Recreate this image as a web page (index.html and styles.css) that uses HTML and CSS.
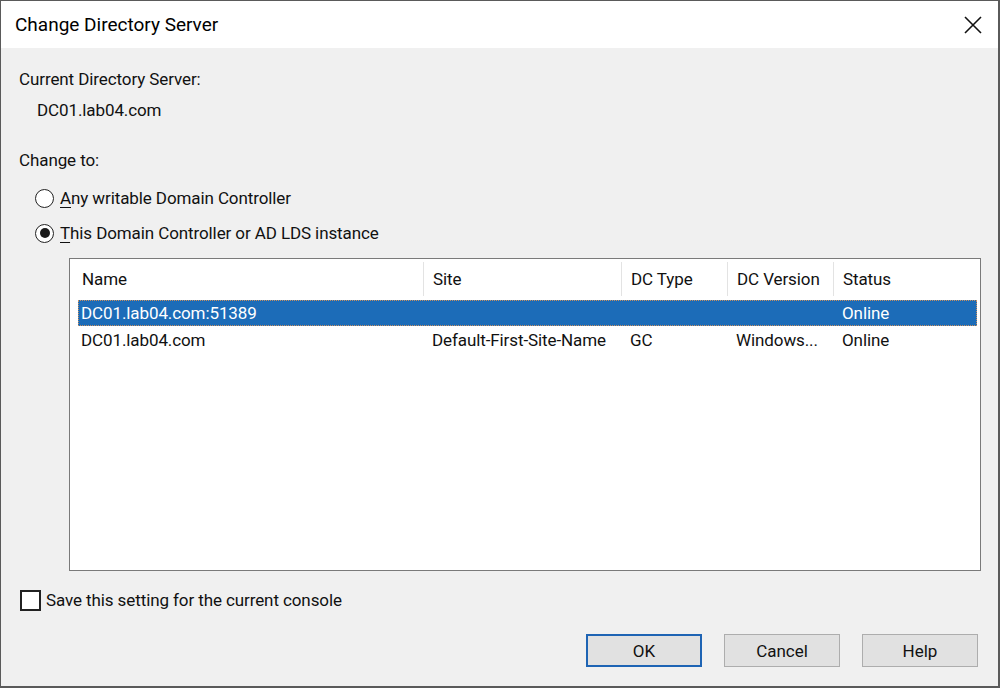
FILE: index.html
```html
<!DOCTYPE html>
<html lang="en">
<head>
    <meta charset="UTF-8">
    <title>Change Directory Server</title>
    <link rel="stylesheet" href="styles.css">
</head>
<body>
    <div class="dialog">
        <div class="titlebar">
            <span class="title">Change Directory Server</span>
            <svg class="close" width="20" height="20" viewBox="0 0 20 20">
                <path d="M2 2 L18 18 M18 2 L2 18" stroke="#111" stroke-width="1.6" fill="none"/>
            </svg>
        </div>
        <div class="content">
            <div class="label first">Current Directory Server:</div>
            <div class="value">DC01.lab04.com</div>
            <div class="label change">Change to:</div>

            <div class="radio-row one">
                <span class="radio"></span>
                <span><u>A</u>ny writable Domain Controller</span>
            </div>
            <div class="radio-row two">
                <span class="radio checked"></span>
                <span><u>T</u>his Domain Controller or AD LDS instance</span>
            </div>

            <div class="list">
                <div class="list-head">
                    <div class="col">Name</div>
                    <div class="col">Site</div>
                    <div class="col">DC Type</div>
                    <div class="col">DC Version</div>
                    <div class="col">Status</div>
                </div>
                <div class="list-row selected">
                    <div class="cell">DC01.lab04.com:51389</div>
                    <div class="cell"></div>
                    <div class="cell"></div>
                    <div class="cell"></div>
                    <div class="cell">Online</div>
                </div>
                <div class="list-row">
                    <div class="cell">DC01.lab04.com</div>
                    <div class="cell">Default-First-Site-Name</div>
                    <div class="cell">GC</div>
                    <div class="cell">Windows...</div>
                    <div class="cell">Online</div>
                </div>
            </div>

            <div class="check-row">
                <span class="checkbox"></span>
                <span>Save this setting for the current console</span>
            </div>

            <div class="buttons">
                <button class="btn default">OK</button>
                <button class="btn">Cancel</button>
                <button class="btn">Help</button>
            </div>
        </div>
    </div>
</body>
</html>
```

FILE: styles.css
```css
body {
    margin: 0;
    font-family: Roboto, "Noto Sans", sans-serif;
    font-size: 17px;
    letter-spacing: -0.1px;
    color: #111;
    background: #f0f0f0;
}

.dialog {
    width: 1000px;
    height: 688px;
    box-sizing: border-box;
    border: 1px solid #5a5a5a;
    border-bottom-width: 2px;
    border-right-width: 2px;
    display: flex;
    flex-direction: column;
}

.titlebar {
    height: 47px;
    background: #fff;
    display: flex;
    align-items: center;
    justify-content: space-between;
    padding: 0 15px 0 14px;
    flex-shrink: 0;
}

.title {
    font-size: 19px;
    letter-spacing: 0;
    color: #000;
}

.close {
    margin-top: 1px;
}

.content {
    flex: 1;
    background: #f0f0f0;
    padding: 0 20px 0 18px;
    display: flex;
    flex-direction: column;
}

.label,
.value,
.radio-row,
.check-row {
    line-height: 22px;
    height: 22px;
}

.label.first {
    margin-top: 20px;
}

.value {
    margin-top: 9px;
    padding-left: 18px;
}

.label.change {
    margin-top: 28px;
}

.radio-row {
    display: flex;
    align-items: center;
    gap: 6px;
    padding-left: 16px;
}

.radio-row.one {
    margin-top: 16px;
}

.radio-row.two {
    margin-top: 13px;
}

.radio {
    width: 17px;
    height: 17px;
    border: 1.5px solid #222;
    border-radius: 50%;
    background: #fff;
    position: relative;
    flex-shrink: 0;
}

.radio.checked::after {
    content: '';
    position: absolute;
    left: 3.5px;
    top: 3.5px;
    width: 10px;
    height: 10px;
    border-radius: 50%;
    background: #1a1a1a;
}

u {
    text-decoration-thickness: 1px;
    text-underline-offset: 3px;
}

.list {
    margin: 14px 0 0 50px;
    width: 912px;
    height: 313px;
    box-sizing: border-box;
    border: 1px solid #7a7a7a;
    background: #fff;
    padding: 1px 3px 0 8px;
}

.list-head,
.list-row {
    display: grid;
    grid-template-columns: 345px 198px 106px 106px 1fr;
}

.list-head {
    height: 38px;
    margin-left: -8px;
    grid-template-columns: 353px 198px 106px 106px 1fr;
}

.list-head .col {
    display: flex;
    align-items: center;
    padding-left: 9px;
    border-left: 1px solid #e3e3e3;
    margin: 2px 0;
}

.list-head .col:first-child {
    padding-left: 12px;
    border-left: none;
}

.list-row {
    height: 26px;
    line-height: 26px;
    margin-top: 1px;
}

.list-row .cell {
    padding-left: 9px;
    white-space: nowrap;
}

.list-row .cell:first-child {
    padding-left: 3px;
}

.list-row.selected {
    margin-top: 2px;
    background: #1c6cb8;
    color: #fff;
    outline: 1px dotted #c99060;
    outline-offset: -1px;
}

.check-row {
    display: flex;
    align-items: center;
    gap: 5px;
    margin-top: 18px;
    padding-left: 1px;
}

.checkbox {
    width: 17px;
    height: 17px;
    border: 2px solid #222;
    background: #fff;
    flex-shrink: 0;
}

.buttons {
    display: flex;
    justify-content: flex-end;
    gap: 22px;
    margin-top: 23px;
}

.btn {
    width: 116px;
    height: 33px;
    box-sizing: border-box;
    font-family: inherit;
    font-size: 17px;
    color: #111;
    background: #e1e1e1;
    border: 1px solid #adadad;
    padding: 0;
}

.btn.default {
    border: 2px solid #1e64b4;
}
```
